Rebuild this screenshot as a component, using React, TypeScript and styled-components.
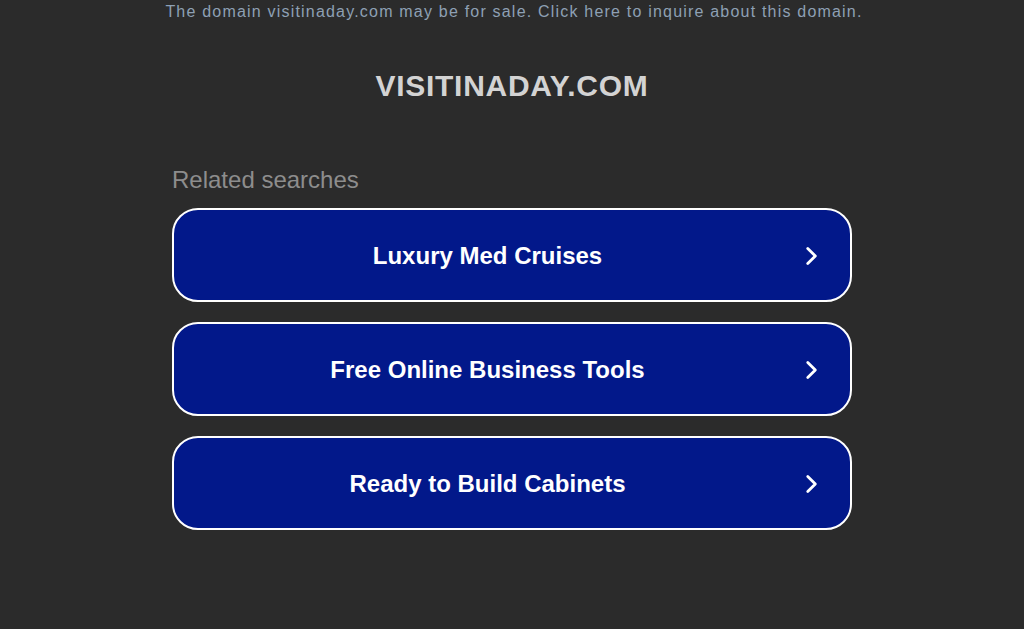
import styled, { createGlobalStyle } from 'styled-components';

const GlobalStyle = createGlobalStyle`
  html, body {
    margin: 0;
    padding: 0;
    background: #2b2b2b;
    font-family: "Liberation Sans", Arial, sans-serif;
  }
`;

const searches = ['Luxury Med Cruises', 'Free Online Business Tools', 'Ready to Build Cabinets'];

export default function App() {
  return (
    <Page>
      <GlobalStyle />
      <Disclaimer>
        The domain visitinaday.com may be for sale. Click here to inquire about this domain.
      </Disclaimer>
      <Title>VISITINADAY.COM</Title>
      <Searches>
        <Heading>Related searches</Heading>
        {searches.map((s) => (
          <SearchLink key={s} href="#">
            <Label>{s}</Label>
            <Chevron viewBox="0 0 24 24">
              <path d="M9 5l7 7-7 7" />
            </Chevron>
          </SearchLink>
        ))}
      </Searches>
    </Page>
  );
}

const Page = styled.div`
  min-height: 629px;
  display: flex;
  flex-direction: column;
  align-items: center;
  background: #2b2b2b;
`;

const Disclaimer = styled.div`
  margin-top: 3px;
  padding-left: 4px;
  font-size: 16px;
  line-height: 18px;
  letter-spacing: 1.2px;
  color: #8ea0b4;
  text-align: center;
`;

const Title = styled.h1`
  margin: 49px 0 0;
  font-size: 30px;
  line-height: 32px;
  font-weight: bold;
  letter-spacing: 0.7px;
  color: #d3d3d3;
`;

const Searches = styled.div`
  width: 680px;
  margin-top: 64px;
  display: flex;
  flex-direction: column;
  gap: 20px;
`;

const Heading = styled.div`
  font-size: 24px;
  line-height: 28px;
  color: #8d8d8d;
  margin-bottom: -6px;
`;

const SearchLink = styled.a`
  box-sizing: border-box;
  height: 94px;
  display: flex;
  align-items: center;
  padding: 2px 26px 0 18px;
  border: 2px solid #ffffff;
  border-radius: 26px;
  background: #02188a;
  text-decoration: none;
`;

const Label = styled.span`
  flex: 1;
  text-align: center;
  font-size: 24px;
  font-weight: bold;
  color: #ffffff;
`;

const Chevron = styled.svg`
  width: 26px;
  height: 26px;
  margin-left: 15px;
  fill: none;
  stroke: #ffffff;
  stroke-width: 2.6;
  stroke-linecap: round;
  stroke-linejoin: round;
`;
